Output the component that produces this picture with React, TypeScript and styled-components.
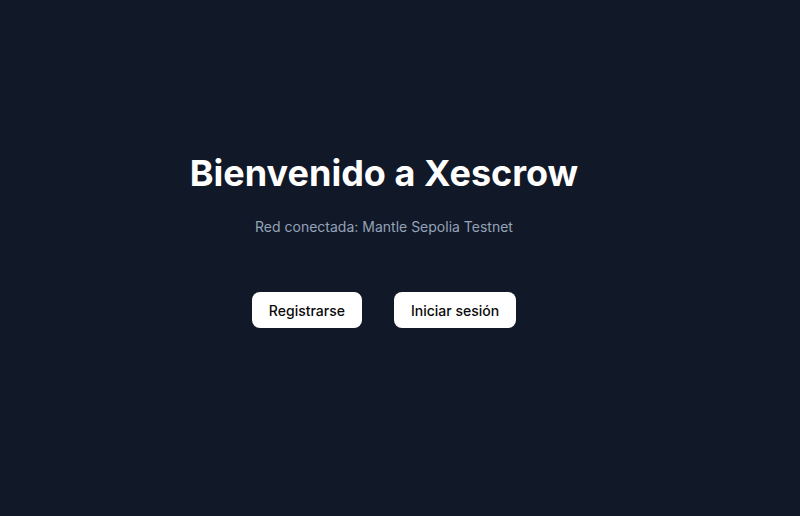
import React from 'react';
import styled, { createGlobalStyle } from 'styled-components';

const GlobalStyle = createGlobalStyle`
  html, body {
    margin: 0;
    padding: 0;
    background: #111827;
    font-family: Inter, 'Liberation Sans', sans-serif;
  }
`;

const Page = styled.main`
  width: 768px;
  min-height: 516px;
  box-sizing: border-box;
  padding-top: 153px;
  display: flex;
  flex-direction: column;
  align-items: center;
`;

const Title = styled.h1`
  margin: 0;
  font-size: 36px;
  line-height: 40px;
  font-weight: 700;
  color: #ffffff;
`;

const Network = styled.p`
  margin: 24px 0 0;
  font-size: 14px;
  line-height: 20px;
  color: #94a3b8;
`;

const Actions = styled.div`
  display: flex;
  gap: 32px;
  margin-top: 55px;
`;

const Button = styled.button`
  height: 36px;
  padding: 0 17px;
  border: none;
  border-radius: 8px;
  background: #ffffff;
  color: #0a0a0a;
  font-family: Inter, 'Liberation Sans', sans-serif;
  font-size: 14px;
  font-weight: 500;
  cursor: pointer;
`;

const App: React.FC = () => (
  <>
    <GlobalStyle />
    <Page>
      <Title>Bienvenido a Xescrow</Title>
      <Network>Red conectada: Mantle Sepolia Testnet</Network>
      <Actions>
        <Button>Registrarse</Button>
        <Button>Iniciar sesión</Button>
      </Actions>
    </Page>
  </>
);

export default App;
